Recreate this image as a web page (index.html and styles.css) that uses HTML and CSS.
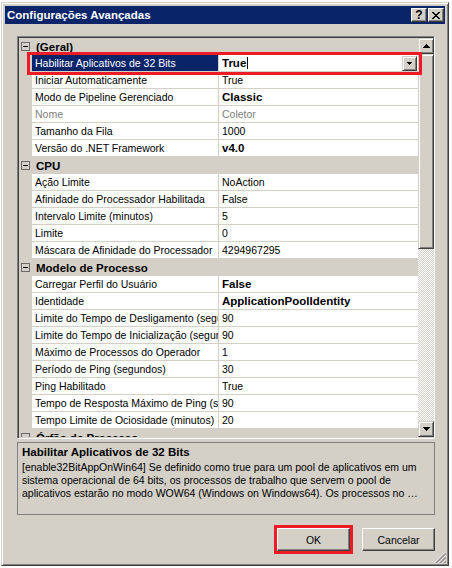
FILE: index.html
```html
<!DOCTYPE html>
<html lang="pt">
<head>
<meta charset="utf-8">
<title>Configurações Avançadas</title>
<link rel="stylesheet" href="styles.css">
</head>
<body>
<div class="window">
  <div class="titlebar">
    <span class="title">Configurações Avançadas</span>
    <span class="capbtn help">?</span>
    <span class="capbtn close">
      <svg width="8" height="7" viewBox="0 0 8 7" shape-rendering="crispEdges"><g fill="#000"><rect x="0" y="0" width="2" height="1"/><rect x="6" y="0" width="2" height="1"/><rect x="1" y="1" width="2" height="1"/><rect x="5" y="1" width="2" height="1"/><rect x="2" y="2" width="4" height="1"/><rect x="3" y="3" width="2" height="1"/><rect x="2" y="4" width="4" height="1"/><rect x="1" y="5" width="2" height="1"/><rect x="5" y="5" width="2" height="1"/><rect x="0" y="6" width="2" height="1"/><rect x="6" y="6" width="2" height="1"/></g></svg>
    </span>
  </div>
  <div class="client">
    <div class="grid">
      <div class="rows">
        <div class="cat"><span class="box"></span>(Geral)</div>
        <div class="prop sel"><span class="gut"></span><span class="n">Habilitar Aplicativos de 32 Bits</span><span class="v"><span class="b">True</span><i class="caret"></i><span class="dd raised"><svg width="5" height="3" viewBox="0 0 5 3" shape-rendering="crispEdges"><g fill="#000"><rect x="0" y="0" width="5" height="1"/><rect x="1" y="1" width="3" height="1"/><rect x="2" y="2" width="1" height="1"/></g></svg></span></span></div>
        <div class="prop"><span class="gut"></span><span class="n">Iniciar Automaticamente</span><span class="v">True</span></div>
        <div class="prop"><span class="gut"></span><span class="n">Modo de Pipeline Gerenciado</span><span class="v b">Classic</span></div>
        <div class="prop dis"><span class="gut"></span><span class="n">Nome</span><span class="v">Coletor</span></div>
        <div class="prop"><span class="gut"></span><span class="n">Tamanho da Fila</span><span class="v">1000</span></div>
        <div class="prop"><span class="gut"></span><span class="n">Versão do .NET Framework</span><span class="v b">v4.0</span></div>
        <div class="cat"><span class="box"></span>CPU</div>
        <div class="prop"><span class="gut"></span><span class="n">Ação Limite</span><span class="v">NoAction</span></div>
        <div class="prop"><span class="gut"></span><span class="n">Afinidade do Processador Habilitada</span><span class="v">False</span></div>
        <div class="prop"><span class="gut"></span><span class="n">Intervalo Limite (minutos)</span><span class="v">5</span></div>
        <div class="prop"><span class="gut"></span><span class="n">Limite</span><span class="v">0</span></div>
        <div class="prop"><span class="gut"></span><span class="n">Máscara de Afinidade do Processador</span><span class="v">4294967295</span></div>
        <div class="cat"><span class="box"></span>Modelo de Processo</div>
        <div class="prop"><span class="gut"></span><span class="n">Carregar Perfil do Usuário</span><span class="v b">False</span></div>
        <div class="prop"><span class="gut"></span><span class="n">Identidade</span><span class="v b">ApplicationPoolIdentity</span></div>
        <div class="prop"><span class="gut"></span><span class="n">Limite do Tempo de Desligamento (segundos)</span><span class="v">90</span></div>
        <div class="prop"><span class="gut"></span><span class="n">Limite do Tempo de Inicialização (segundos)</span><span class="v">90</span></div>
        <div class="prop"><span class="gut"></span><span class="n">Máximo de Processos do Operador</span><span class="v">1</span></div>
        <div class="prop"><span class="gut"></span><span class="n">Período de Ping (segundos)</span><span class="v">30</span></div>
        <div class="prop"><span class="gut"></span><span class="n">Ping Habilitado</span><span class="v">True</span></div>
        <div class="prop"><span class="gut"></span><span class="n">Tempo de Resposta Máximo de Ping (segundos)</span><span class="v">90</span></div>
        <div class="prop"><span class="gut"></span><span class="n">Tempo Limite de Ociosidade (minutos)</span><span class="v">20</span></div>
        <div class="cat"><span class="box"></span>Órfão de Processo</div>
      </div>
      <div class="sb">
        <div class="arrow raised"><svg width="7" height="4" viewBox="0 0 7 4" shape-rendering="crispEdges"><g fill="#000"><rect x="3" y="0" width="1" height="1"/><rect x="2" y="1" width="3" height="1"/><rect x="1" y="2" width="5" height="1"/><rect x="0" y="3" width="7" height="1"/></g></svg></div>
        <div class="thumb raised"></div>
        <div class="track"></div>
        <div class="arrow raised"><svg width="7" height="4" viewBox="0 0 7 4" shape-rendering="crispEdges"><g fill="#000"><rect x="0" y="0" width="7" height="1"/><rect x="1" y="1" width="5" height="1"/><rect x="2" y="2" width="3" height="1"/><rect x="3" y="3" width="1" height="1"/></g></svg></div>
      </div>
      <div class="hl"></div>
    </div>
    <div class="desc">
      <div class="desc-title">Habilitar Aplicativos de 32 Bits</div>
      <div class="desc-text">[enable32BitAppOnWin64] Se definido como true para um pool de aplicativos em um<br>sistema operacional de 64 bits, os processos de trabalho que servem o pool de<br>aplicativos estarão no modo WOW64 (Windows on Windows64). Os processos no …</div>
    </div>
    <div class="footer">
      <button class="btn ok">OK</button>
      <button class="btn">Cancelar</button>
    </div>
  </div>
  <svg class="grip" width="12" height="12" viewBox="0 0 12 12">
    <g stroke-width="1">
      <line x1="12" y1="0.5" x2="0.5" y2="12" stroke="#fff"/>
      <line x1="12" y1="1.5" x2="1.5" y2="12" stroke="#808080"/>
      <line x1="12" y1="2.5" x2="2.5" y2="12" stroke="#808080"/>
      <line x1="12" y1="4.5" x2="4.5" y2="12" stroke="#fff"/>
      <line x1="12" y1="5.5" x2="5.5" y2="12" stroke="#808080"/>
      <line x1="12" y1="6.5" x2="6.5" y2="12" stroke="#808080"/>
      <line x1="12" y1="8.5" x2="8.5" y2="12" stroke="#fff"/>
      <line x1="12" y1="9.5" x2="9.5" y2="12" stroke="#808080"/>
      <line x1="12" y1="10.5" x2="10.5" y2="12" stroke="#808080"/>
    </g>
  </svg>
</div>
</body>
</html>
```

FILE: styles.css
```css
* { box-sizing: border-box; }

body {
  margin: 0;
  background: #fff;
  font-family: "Liberation Sans", Arial, sans-serif;
  font-size: 10.5px;
  color: #000;
}

.window {
  position: relative;
  width: 448px;
  height: 564px;
  margin: 2px 0 0 1px;
  background: #D4D0C8;
  border: 1px solid;
  border-color: #D4D0C8 #404040 #404040 #D4D0C8;
  box-shadow: inset 1px 1px #fff, inset -1px -1px #808080;
  padding: 3px;
}

.titlebar {
  height: 18px;
  background: #0A246A;
  display: flex;
  align-items: center;
  padding: 0 1px 0 2px;
}

.title {
  flex: 1;
  color: #fff;
  font-weight: bold;
  font-size: 11.5px;
}

.capbtn {
  width: 16px;
  height: 14px;
  background: #D4D0C8;
  border: 1px solid;
  border-color: #fff #404040 #404040 #fff;
  box-shadow: inset -1px -1px #808080;
  display: flex;
  align-items: center;
  justify-content: center;
  font-weight: bold;
  font-size: 12px;
  line-height: 1;
}

.help { margin-right: 1px; }

.client { padding: 12px 0 0 12px; }

.grid {
  position: relative;
  width: 418px;
  height: 403px;
  display: flex;
  border: 1px solid;
  border-color: #808080 #fff #fff #808080;
  box-shadow: inset 1px 1px #404040;
  padding: 1px 0 1px 1px;
}

.rows {
  width: 399px;
  height: 399px;
  overflow: hidden;
  background: #fff;
  flex: none;
}

.cat {
  height: 17px;
  background: #D4D0C8;
  display: flex;
  align-items: center;
  padding-left: 2px;
  font-weight: bold;
  font-size: 11.5px;
  white-space: nowrap;
}

.box {
  width: 9px;
  height: 9px;
  border: 1px solid #6a6a6a;
  position: relative;
  margin-right: 6px;
  flex: none;
}

.box::after {
  content: "";
  position: absolute;
  left: 1px;
  top: 3px;
  width: 5px;
  height: 1px;
  background: #000;
}

.prop {
  height: 17px;
  display: flex;
}

.gut {
  width: 13px;
  background: #D4D0C8;
  flex: none;
}

.n {
  width: 187px;
  flex: none;
  border-right: 1px solid #D4D0C8;
  border-bottom: 1px solid #D4D0C8;
  padding-left: 3px;
  white-space: nowrap;
  overflow: hidden;
  line-height: 16px;
}

.v {
  flex: 1;
  position: relative;
  border-bottom: 1px solid #D4D0C8;
  padding-left: 3px;
  white-space: nowrap;
  overflow: hidden;
  line-height: 16px;
}

.b {
  font-weight: bold;
  font-size: 11.5px;
}

.dis { color: #808080; }

.sel .n {
  background: #0A246A;
  color: #fff;
}

.caret {
  display: inline-block;
  width: 1px;
  height: 12px;
  background: #000;
  vertical-align: -2px;
  margin-left: 1px;
}

.raised {
  background: #D4D0C8;
  border: 1px solid;
  border-color: #D4D0C8 #404040 #404040 #D4D0C8;
  box-shadow: inset 1px 1px #fff, inset -1px -1px #808080;
}

.dd {
  position: absolute;
  right: 1px;
  top: 1px;
  width: 15px;
  height: 15px;
  display: flex;
  align-items: center;
  justify-content: center;
}

.sb {
  width: 16px;
  flex: none;
  display: flex;
  flex-direction: column;
}

.arrow {
  height: 16px;
  flex: none;
  display: flex;
  align-items: center;
  justify-content: center;
}

.thumb {
  height: 195px;
  flex: none;
}

.track {
  flex: 1;
  background: repeating-conic-gradient(#fff 0 25%, #D4D0C8 0 50%) 0 0 / 2px 2px;
}

.hl {
  position: absolute;
  left: 9px;
  top: 15px;
  width: 395px;
  height: 23px;
  border: 3px solid #ED1C24;
  pointer-events: none;
}

.desc {
  width: 418px;
  height: 73px;
  margin-top: 3px;
  border: 1px solid #808080;
  padding: 2px 0 0 4px;
}

.desc-title {
  font-weight: bold;
  font-size: 11.5px;
  line-height: 15px;
}

.desc-text {
  line-height: 13px;
  margin-top: 1px;
  white-space: nowrap;
}

.footer {
  width: 418px;
  display: flex;
  justify-content: flex-end;
  gap: 12px;
  margin-top: 13px;
}

.btn {
  width: 73px;
  height: 23px;
  padding: 0;
  font: inherit;
  color: #000;
  background: #D4D0C8;
  border: 1px solid;
  border-color: #fff #404040 #404040 #fff;
  box-shadow: inset -1px -1px #808080;
}

.ok { outline: 3px solid #ED1C24; }

.grip {
  position: absolute;
  right: 2px;
  bottom: 2px;
}
```
